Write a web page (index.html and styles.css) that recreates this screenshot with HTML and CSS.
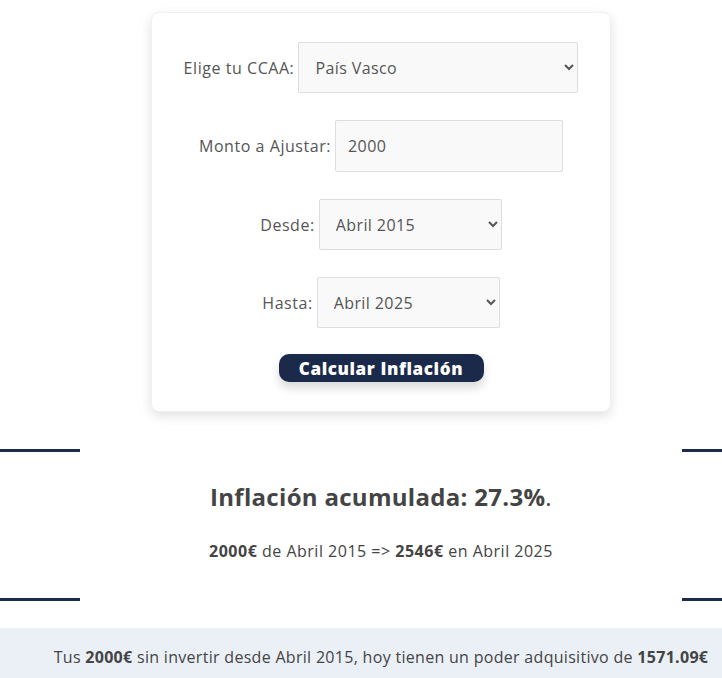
FILE: index.html
```html
<!DOCTYPE html>
<html lang="es">
<head>
<meta charset="utf-8">
<title>Calculadora de Inflación</title>
<link rel="stylesheet" href="styles.css">
</head>
<body>
<div class="page">
  <form class="card">
    <div class="row">
      <label class="label" for="ccaa">Elige tu CCAA:</label>
      <select id="ccaa" class="field field-ccaa">
        <option>País Vasco</option>
      </select>
    </div>
    <div class="row">
      <label class="label" for="monto">Monto a Ajustar:</label>
      <input id="monto" class="field field-monto" type="text" value="2000">
    </div>
    <div class="row">
      <label class="label" for="desde">Desde:</label>
      <select id="desde" class="field field-date">
        <option>Abril 2015</option>
      </select>
    </div>
    <div class="row row-last">
      <label class="label" for="hasta">Hasta:</label>
      <select id="hasta" class="field field-date">
        <option>Abril 2025</option>
      </select>
    </div>
    <div class="row row-btn">
      <button type="button" class="btn">Calcular Inflación</button>
    </div>
  </form>

  <div class="divider"><span class="bar"></span><span class="bar"></span></div>
  <div class="result">
    <h2 class="result-title"><strong>Inflación acumulada: 27.3%</strong>.</h2>
    <p class="result-line"><strong>2000€</strong> de Abril 2015 =&gt; <strong>2546€</strong> en Abril 2025</p>
  </div>
  <div class="divider divider-end"><span class="bar"></span><span class="bar"></span></div>

  <div class="band">
    <p class="band-text">Tus <strong>2000€</strong> sin invertir desde Abril 2015, hoy tienen un poder adquisitivo de <strong>1571.09€</strong></p>
  </div>
</div>
</body>
</html>
```

FILE: styles.css
```css
html, body {
  margin: 0;
  padding: 0;
  overflow: hidden;
  background: #ffffff;
}

body {
  font-family: "Open Sans", "Noto Sans", "Liberation Sans", sans-serif;
  color: #555555;
  font-size: 16px;
}

.page {
  width: 762px;
  padding-top: 12px;
}

.card {
  width: 460px;
  box-sizing: border-box;
  margin: 0 auto;
  background: #ffffff;
  border-radius: 8px;
  border: 1px solid #f0f0f0;
  box-shadow: 0 4px 12px rgba(0, 0, 0, 0.12);
  padding: 29px 0 29px;
}

.row {
  display: flex;
  justify-content: center;
  align-items: center;
  gap: 4px;
  margin-bottom: 27px;
}

.row-last {
  margin-bottom: 26px;
}

.row-btn {
  margin-bottom: 0;
}

.label {
  font-size: 16px;
  letter-spacing: 0.55px;
  color: #555555;
}

.field {
  box-sizing: border-box;
  height: 51px;
  border: 1px solid #dddddd;
  border-radius: 2px;
  background: #f9f9f9;
  color: #555555;
  font-family: inherit;
  font-size: 16px;
  letter-spacing: 0.4px;
  padding: 0 8px 0 12px;
}

.field-ccaa { width: 280px; }
.field-monto { width: 228px; height: 52px; padding-left: 12px; outline: none; }
.field-date { width: 183px; }

.btn {
  width: 205px;
  height: 28px;
  border: none;
  border-radius: 10px;
  background: #1b2a4a;
  color: #ffffff;
  font-family: inherit;
  font-weight: 800;
  font-size: 17px;
  letter-spacing: 0.6px;
  padding: 0;
  box-shadow: 0 6px 10px rgba(0, 0, 0, 0.15);
}

.divider {
  display: flex;
  justify-content: space-between;
  margin-top: 37px;
}

.divider-end {
  margin-top: 0;
}

.bar {
  display: block;
  width: 80px;
  height: 3px;
  background: #1d2b4b;
}

.result {
  text-align: center;
  color: #444444;
  padding: 30px 0 36px;
}

.result-title {
  margin: 0;
  font-size: 24px;
  line-height: 30px;
  font-weight: 400;
  letter-spacing: 0.3px;
}

.result-title strong {
  font-weight: 700;
}

.result-line {
  margin: 28px 0 0;
  font-size: 16px;
  line-height: 22px;
  letter-spacing: 0.5px;
}

.band {
  margin-top: 27px;
  background: #ebf0f7;
  padding: 18px 0 20px;
  text-align: center;
}

.band-text {
  margin: 0;
  font-size: 16px;
  line-height: 22px;
  letter-spacing: 0.3px;
  color: #444444;
}
```
